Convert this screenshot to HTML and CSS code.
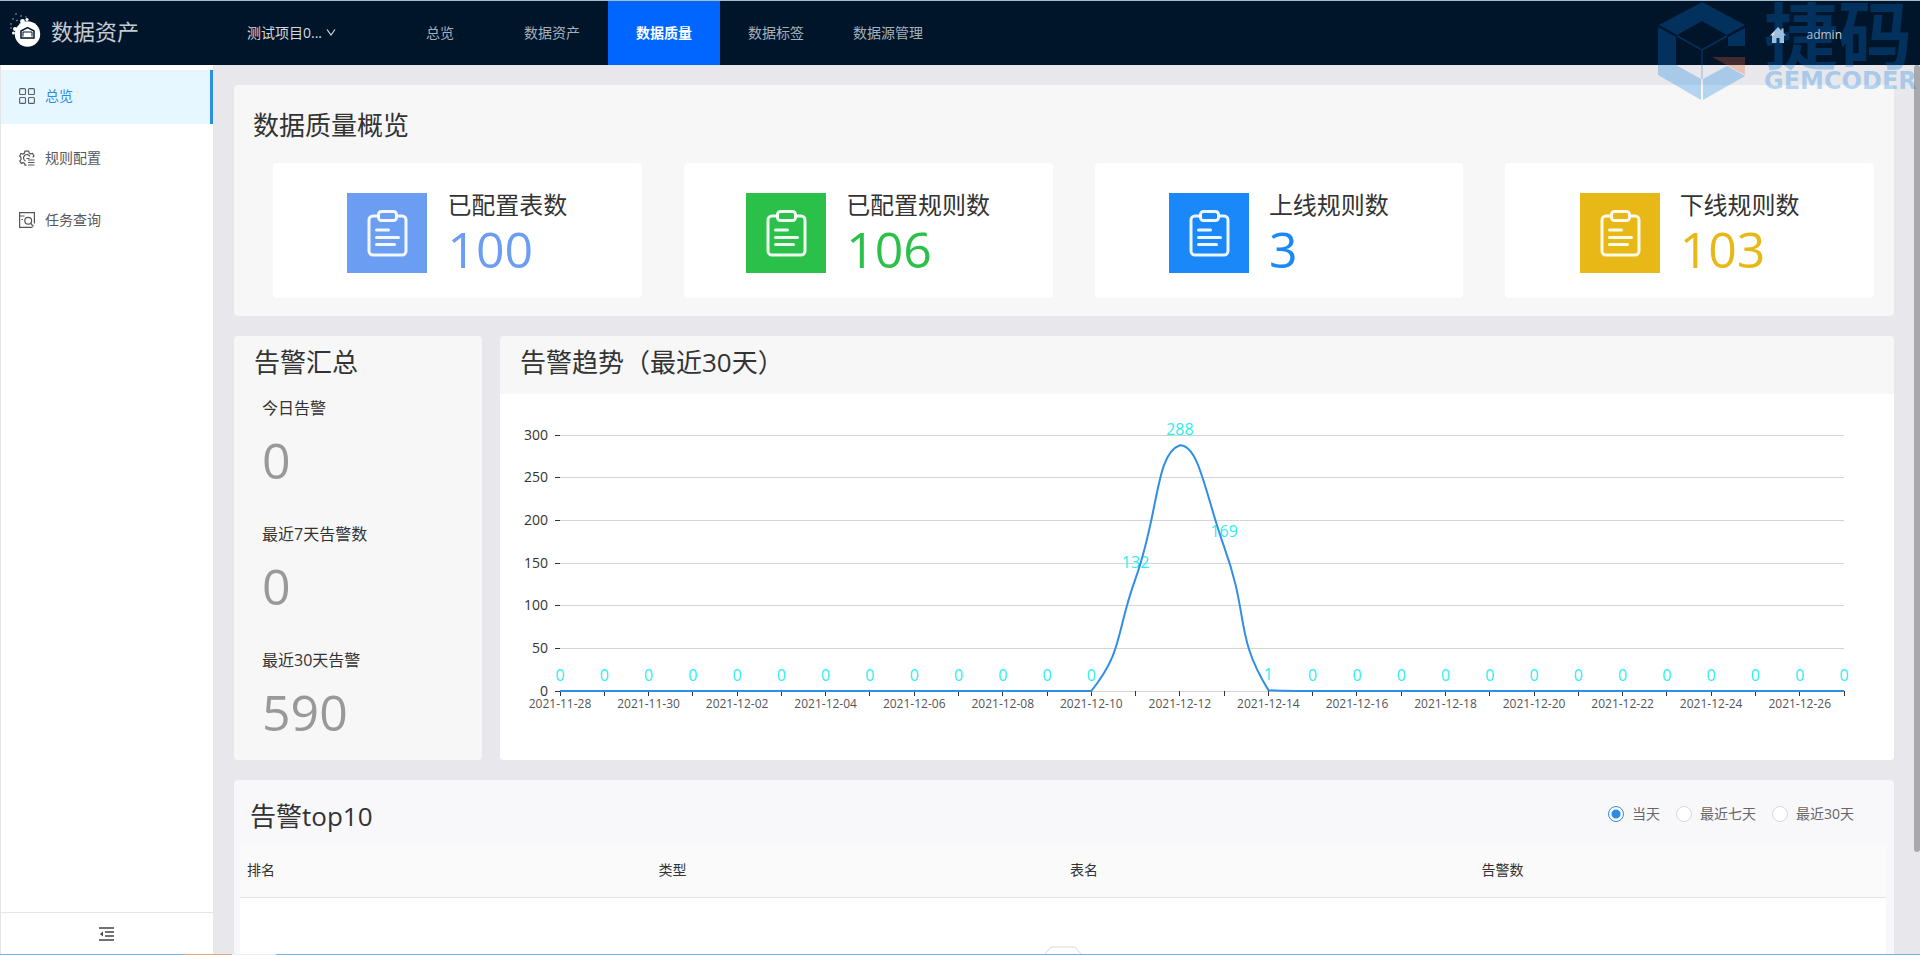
FILE: index.html
```html
<!DOCTYPE html>
<html lang="zh-CN">
<head>
<meta charset="utf-8">
<title>数据资产</title>
<link rel="stylesheet" href="styles.css">
</head>
<body>
<svg class="defs" aria-hidden="true">
  <symbol id="clipboard" viewBox="0 0 80 80">
    <g fill="none" stroke="#fff" stroke-opacity=".92" stroke-width="3" stroke-linecap="round" stroke-linejoin="round">
      <path d="M31 23h-5a4 4 0 0 0-4 4v31a4 4 0 0 0 4 4h29a4 4 0 0 0 4-4V27a4 4 0 0 0-4-4h-5"/>
      <rect x="31.500" y="18.500" width="18" height="9" rx="3"/>
      <path d="M29.500 37h12M29.500 44.500h22M29.500 51.500h18"/>
    </g>
  </symbol>
</svg>

<header class="topbar">
  <div class="brand">
    <svg class="brand-logo" viewBox="0 0 34 38">
      <circle cx="18.500" cy="22" r="12.700" fill="#fff"/>
      <circle cx="6" cy="17" r="2" fill="#fff"/><circle cx="13.500" cy="9.500" r="2.400" fill="#fff"/>
      <circle cx="4.500" cy="21" r="1.500" fill="#fff"/><circle cx="18" cy="7.500" r="1.600" fill="#fff"/>
      <circle cx="8" cy="12" r="2.200" fill="#00152a"/><circle cx="10.500" cy="14" r="1.200" fill="#fff"/>
      <g fill="#9fb0bf"><circle cx="2" cy="12" r=".8"/><circle cx="4" cy="7" r=".8"/><circle cx="7" cy="2" r=".8"/><circle cx="8" cy="8.500" r=".8"/><circle cx="12" cy="4" r=".8"/><circle cx="2" cy="16" r=".8"/><circle cx="17" cy="5" r=".7"/></g>
      <path d="M12 26v-7l6.500-3.500L25 19v7z" fill="#fff" stroke="#00152a" stroke-width="1.500"/>
      <path d="M14 24.500v-4.500h9v4.500" fill="none" stroke="#00152a" stroke-width="1"/>
    </svg>
    <span class="brand-name">数据资产</span>
  </div>
  <button class="project" type="button">测试项目0...
    <svg class="chevron" viewBox="0 0 10 10"><path d="M1 1.500l4 5.500 4-5.500" fill="none" stroke="currentColor" stroke-width="1.200"/></svg>
  </button>
  <nav class="menu">
    <a href="#">总览</a>
    <a href="#">数据资产</a>
    <a class="active" href="#">数据质量</a>
    <a href="#">数据标签</a>
    <a href="#">数据源管理</a>
  </nav>
  <div class="account">
    <a href="#" class="home" aria-label="首页"><svg viewBox="0 0 16 16"><path d="M8 0L0 8.500h2V16h4.500v-5h3v5H14V8.500h2l-2.500-2.700V1.500h-2v2.200z" fill="currentColor"/></svg></a>
    <a href="#" class="user">admin</a>
  </div>
</header>

<div class="layout">
  <aside class="sidebar">
    <nav class="side-menu">
      <a class="active" href="#">
        <svg viewBox="0 0 16 16"><g fill="none" stroke="#555f66" stroke-width="1.100"><rect x=".6" y=".6" width="5.900" height="5.900" rx="1"/><rect x="9.500" y=".6" width="5.900" height="5.900" rx="1"/><rect x=".6" y="9.500" width="5.900" height="5.900" rx="1"/><rect x="9.500" y="9.500" width="5.900" height="5.900" rx="1"/></g></svg>
        总览</a>
      <a href="#">
        <svg viewBox="0 0 16 16"><g fill="none" stroke="#555" stroke-width="1.200"><path d="M7.500 15.200H6l-.4-1.800-1.500-.8-1.800.8-1.500-2.300 1.200-1.500V7.400L.7 6 2 3.500l1.900.5 1.600-1L6 1.100h3.600l.6 1.900 1.500.9 1.800-.5L15 6l-1.300 1.300"/><path d="M6.500 11A3.400 3.400 0 1 1 11 6.500M7.500 8.500h3M9 10h6.500M9 12.500h6.500M9 15h6.500"/></g></svg>
        规则配置</a>
      <a href="#">
        <svg viewBox="0 0 16 16"><g fill="none" stroke="#555" stroke-width="1.200"><path d="M13.500 15.400H.6V.6h14.800v11M.6 4h5M2.500 7.500h1.500"/><circle cx="9.200" cy="8.700" r="3.400"/><path d="M11.500 11.200l3 3.300"/></g></svg>
        任务查询</a>
    </nav>
    <button class="collapse" type="button" aria-label="收起菜单">
      <svg viewBox="0 0 16 14"><path d="M0 1h15M6 5h9M6 9h9M0 13h15" stroke="#444" stroke-width="1.300" fill="none"/><path d="M4 4.500v5L1 7z" fill="#444"/></svg>
    </button>
  </aside>

  <main class="content">
    <section class="panel overview">
      <h2>数据质量概览</h2>
      <div class="cards">
        <article class="card blue"><svg class="card-icon"><use href="#clipboard"/></svg><div><h3>已配置表数</h3><p>100</p></div></article>
        <article class="card green"><svg class="card-icon"><use href="#clipboard"/></svg><div><h3>已配置规则数</h3><p>106</p></div></article>
        <article class="card azure"><svg class="card-icon"><use href="#clipboard"/></svg><div><h3>上线规则数</h3><p>3</p></div></article>
        <article class="card gold"><svg class="card-icon"><use href="#clipboard"/></svg><div><h3>下线规则数</h3><p>103</p></div></article>
      </div>
    </section>

    <div class="alerts">
      <section class="panel summary">
        <h2>告警汇总</h2>
        <dl>
          <div><dt>今日告警</dt><dd>0</dd></div>
          <div><dt>最近7天告警数</dt><dd>0</dd></div>
          <div><dt>最近30天告警</dt><dd>590</dd></div>
        </dl>
      </section>
      <section class="panel trend">
        <h2>告警趋势（最近30天）</h2>
        <svg class="chart" id="chart" role="img" aria-label="告警趋势"></svg>
      </section>
    </div>

    <section class="panel top10">
      <div class="top10-head">
        <h2>告警top10</h2>
        <form class="range">
          <label><input type="radio" name="range" checked>当天</label>
          <label><input type="radio" name="range">最近七天</label>
          <label><input type="radio" name="range">最近30天</label>
        </form>
      </div>
      <table>
        <thead><tr><th>排名</th><th>类型</th><th>表名</th><th>告警数</th></tr></thead>
        <tbody><tr><td colspan="4">
          <svg class="empty" viewBox="0 0 64 40"><path d="M9 40V14L20 1h24l11 13v26" fill="none" stroke="#d9d9d9"/></svg>
        </td></tr></tbody>
      </table>
    </section>
  </main>
</div>

<div class="scroll-thumb"></div>
<div class="watermark" aria-hidden="true">
  <svg viewBox="0 0 88 98">
    <g fill="#0a7be0">
      <path d="M44 0l43 23-18 10-25-14-25 14L1 23z"/>
      <path d="M0 25l18 10v28l25 14v21L0 73z"/>
      <path d="M45 98V77l24-13 18 10z"/>
      <path d="M70 35l17-9v18H70z"/>
    </g>
    <path d="M54 55h33v18z" fill="#f0603a"/>
    <path d="M19 34l25 14 25-14M44 48v29" fill="none" stroke="#0a7be0" stroke-width="1.500"/>
  </svg>
  <div class="watermark-text"><span class="wm-cn">捷码</span><span class="wm-en">GEMCODER</span></div>
</div>
<div class="bottom-line"></div>
<script src="chart.js"></script>
</body>
</html>
```
FILE: styles.css
```css
* { box-sizing: border-box; }
html, body { height: 100%; }
body {
  margin: 0;
  display: flex;
  flex-direction: column;
  position: relative;
  overflow: hidden;
  background: #e8e8ec;
  color: #333;
  font: 14px/22px "Open Sans", "Noto Sans CJK SC", sans-serif;
}
h2, h3, p, dl, dd { margin: 0; font-weight: 400; }
a { color: inherit; text-decoration: none; }
button { border: 0; background: none; padding: 0; font: inherit; color: inherit; cursor: pointer; }
.defs { display: none; }

.topbar {
  flex: none;
  display: flex;
  height: 65px;
  border-top: 1px solid #a3bccb;
  background: #00152a;
  color: #a6b0ba;
}
.brand { display: flex; align-items: center; gap: 8px; width: 247px; padding: 0 0 4px 9px; }
.brand-logo { width: 34px; height: 38px; }
.brand-name { font-size: 22px; color: #c3cad1; }
.project { display: flex; align-items: center; gap: 4px; width: 137px; color: #d5dadf; }
.chevron { width: 10px; height: 10px; }
.menu { display: flex; }
.menu a { display: flex; align-items: center; justify-content: center; width: 112px; }
.menu .active { background: #06f; color: #fff; font-weight: 700; }
.account { display: flex; align-items: center; gap: 20px; margin-left: auto; padding: 4px 78px 0 0; font-size: 12px; color: #d5dadf; }
.home svg { display: block; width: 16px; height: 16px; }

.layout { flex: 1; display: flex; min-height: 0; }
.sidebar { flex: none; display: flex; flex-direction: column; width: 213px; background: #fff; border-left: 1px solid #e4e4e8; }
.side-menu { display: flex; flex-direction: column; gap: 8px; padding-top: 5px; color: #595959; }
.side-menu a { display: flex; align-items: center; gap: 10px; height: 54px; padding: 0 0 2px 18px; }
.side-menu svg { width: 16px; height: 16px; }
.side-menu .active { background: #e6f7ff; color: #2a8ee6; border-right: 3px solid #2a8ee6; }
.collapse { display: flex; align-items: center; justify-content: center; height: 43px; margin-top: auto; border-top: 1px solid #e6e6ea; }
.collapse svg { width: 16px; height: 14px; }

.content { flex: 1; display: flex; flex-direction: column; gap: 20px; min-width: 0; padding: 20px 26px 0 21px; overflow: hidden; }
.panel { flex: none; border-radius: 4px; background: #f7f7f8; }
h2 { font-size: 26px; line-height: 40px; }

.overview { padding: 20px 20px 18px 19px; }
.cards { display: grid; grid-template-columns: repeat(4, 1fr); gap: 42px; margin-top: 18px; padding-left: 20px; }
.card { display: flex; align-items: center; justify-content: center; gap: 20px; height: 135px; padding-top: 4px; border-radius: 4px; background: #fff; }
.card-icon { width: 80px; height: 80px; }
.card h3 { font-size: 24px; line-height: 32px; }
.card p { font-size: 50px; line-height: 56px; }
.blue p { color: #6b9ef2; }
.blue .card-icon { background: #6b9ef2; }
.green p { color: #2bc04a; }
.green .card-icon { background: #2bc04a; }
.azure p { color: #1a88f8; }
.azure .card-icon { background: #1a88f8; }
.gold p { color: #e8b816; }
.gold .card-icon { background: #e8b816; }

.alerts { display: flex; gap: 18px; }
.summary { width: 248px; padding: 6px 20px 14px; }
.summary dl { display: flex; flex-direction: column; gap: 32px; padding: 14px 8px 0; }
.summary dt { font-size: 16px; line-height: 24px; }
.summary dd { margin-top: 10px; font-size: 50px; line-height: 60px; color: #999; }
.trend { flex: 1; display: flex; flex-direction: column; min-width: 0; overflow: hidden; }
.trend h2 { padding: 6px 20px 12px; }
.chart { flex: 1; width: 100%; min-height: 366px; background: #fff; }
.chart .grid { stroke: #d4d4d4; }
.chart .tick { stroke: #333; }
.chart .line { fill: none; stroke: #2f8ee8; stroke-width: 2; }
.chart .y-label { font-size: 14px; fill: #333; text-anchor: end; }
.chart .x-label { font-size: 12px; fill: #555; text-anchor: middle; }
.chart .value { font-size: 16px; fill: #2ceeee; text-anchor: middle; }

.top10 { padding: 0 8px 0 6px; background: #f8f8fa; }
.top10-head { display: flex; align-items: center; justify-content: space-between; height: 65px; padding: 6px 32px 0 10px; }
.range { display: flex; gap: 16px; padding-bottom: 4px; color: #666; }
.range label { display: flex; align-items: center; gap: 8px; }
.range input { appearance: none; width: 16px; height: 16px; margin: 0; border: 1px solid #d9d9d9; border-radius: 50%; background: #fff; }
.range input:checked { border-color: #2a8ee6; background: radial-gradient(circle, #2a8ee6 4px, #fff 5px); }
table { width: 100%; table-layout: fixed; border-collapse: collapse; }
th { height: 52px; padding: 0 7px 2px; border-bottom: 1px solid #e4e4e6; background: #fafafa; font-weight: 400; text-align: left; }
td { height: 200px; padding: 48px 0 0; background: #fff; text-align: center; vertical-align: top; }
.empty { width: 64px; height: 40px; }

.scroll-thumb { position: absolute; top: 65px; right: 0; width: 6px; height: 787px; border-radius: 4px; background: #a9a9ac; }
.watermark { position: absolute; top: 2px; right: 0; display: flex; gap: 18px; width: 262px; overflow: hidden; opacity: .28; pointer-events: none; color: #0a7be0; }
.watermark svg { flex: none; width: 88px; height: 98px; }
.watermark-text { display: flex; flex-direction: column; font-weight: 700; white-space: nowrap; }
.wm-cn { font-size: 74px; line-height: 66px; }
.wm-en { font: 700 24px/26px "DejaVu Sans", sans-serif; }
.bottom-line { position: absolute; left: 0; right: 0; bottom: 0; height: 1px; background: linear-gradient(90deg, #6db3e6 185px, #e0a878 185px 232px, #e8f0f6 232px 276px, #6db3e6 276px); }
```
FILE: chart.js
```javascript
const values = [0, 0, 0, 0, 0, 0, 0, 0, 0, 0, 0, 0, 0, 132, 288, 169, 1, 0, 0, 0, 0, 0, 0, 0, 0, 0, 0, 0, 0, 0];
const start = Date.UTC(2021, 10, 28);
const svg = document.getElementById("chart");
const clamp = (v, a, b) => Math.min(Math.max(v, Math.min(a, b)), Math.max(a, b));

function add(name, className, attrs, text) {
  const node = document.createElementNS("http://www.w3.org/2000/svg", name);
  node.setAttribute("class", className);
  for (const key in attrs) node.setAttribute(key, attrs[key]);
  if (text !== undefined) node.textContent = text;
  svg.appendChild(node);
}

// Control points follow the neighbours' direction, kept within each segment's box.
function smoothPath(points) {
  const handles = points.map((p, i) => {
    const a = points[i - 1] || p;
    const b = points[i + 1] || p;
    const before = Math.hypot(p.x - a.x, p.y - a.y);
    const after = Math.hypot(b.x - p.x, b.y - p.y);
    const ratio = after / (before + after);
    const dx = (b.x - a.x) / 2;
    const dy = (b.y - a.y) / 2;
    return {
      inX: clamp(p.x - dx * (1 - ratio), a.x, p.x), inY: clamp(p.y - dy * (1 - ratio), a.y, p.y),
      outX: clamp(p.x + dx * ratio, p.x, b.x), outY: clamp(p.y + dy * ratio, p.y, b.y)
    };
  });
  return points.reduce((d, p, i) => i === 0 ? `M${p.x} ${p.y}`
    : `${d}C${handles[i - 1].outX} ${handles[i - 1].outY} ${handles[i].inX} ${handles[i].inY} ${p.x} ${p.y}`, "");
}

function draw() {
  svg.replaceChildren();
  const left = 60;
  const right = svg.getBoundingClientRect().width - 50;
  const top = 41;
  const bottom = 297;
  const yOf = v => bottom - (v / 300) * (bottom - top);
  const points = values.map((v, i) => ({ x: left + (i * (right - left)) / (values.length - 1), y: yOf(v) }));

  for (let v = 0; v <= 300; v += 50) {
    const y = Math.floor(yOf(v)) + 0.5;
    add("line", "grid", { x1: left, x2: right, y1: y, y2: y });
    add("line", "tick", { x1: left - 5, x2: left, y1: y, y2: y });
    add("text", "y-label", { x: left - 12, y: y + 4 }, v);
  }
  points.forEach((p, i) => {
    const x = Math.floor(p.x) + 0.5;
    add("line", "tick", { x1: x, x2: x, y1: bottom, y2: bottom + 5 });
    if (i % 2 === 0) {
      add("text", "x-label", { x: p.x, y: bottom + 17 }, new Date(start + i * 864e5).toISOString().slice(0, 10));
    }
    add("text", "value", { x: p.x, y: p.y - 10 }, values[i]);
  });
  add("path", "line", { d: smoothPath(points) });
}

draw();
window.addEventListener("resize", draw);
```
